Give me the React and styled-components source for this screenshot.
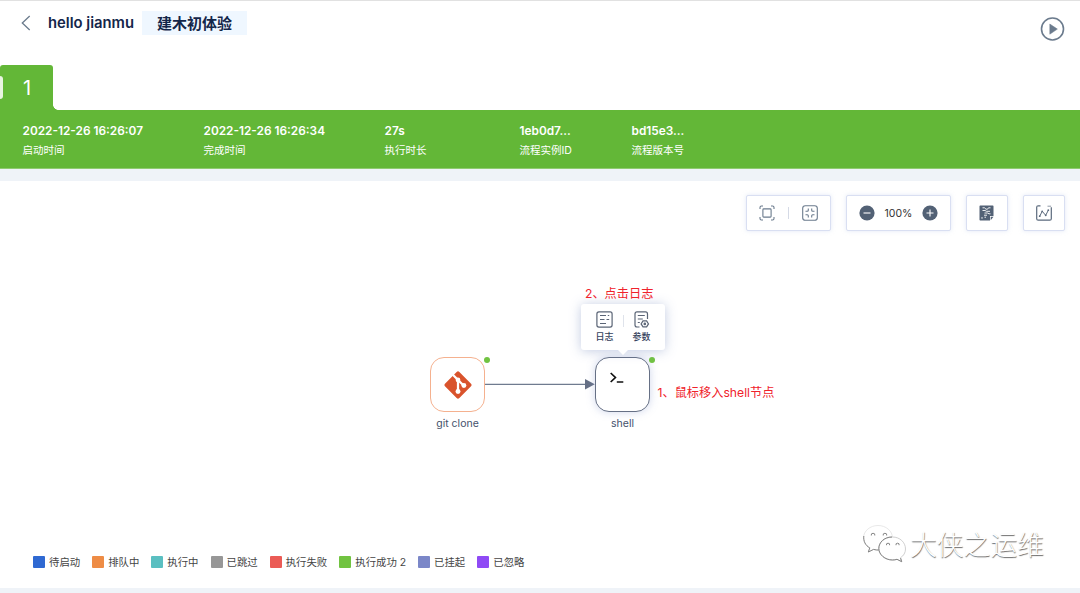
import styled, { createGlobalStyle } from "styled-components";

const runInfo = [
	{ value: "2022-12-26 16:26:07", label: "启动时间", width: 181 },
	{ value: "2022-12-26 16:26:34", label: "完成时间", width: 181 },
	{ value: "27s", label: "执行时长", width: 135 },
	{ value: "1eb0d7...", label: "流程实例ID", width: 112 },
	{ value: "bd15e3...", label: "流程版本号", width: 112 },
];

const legend = [
	{ color: "#2f69d2", label: "待启动" },
	{ color: "#ee8c45", label: "排队中" },
	{ color: "#5abfc1", label: "执行中" },
	{ color: "#979797", label: "已跳过" },
	{ color: "#eb5b56", label: "执行失败" },
	{ color: "#71c341", label: "执行成功 2" },
	{ color: "#7b87c8", label: "已挂起" },
	{ color: "#8f4af5", label: "已忽略" },
];

export default function App() {
	return (
		<Page>
			<GlobalStyle />
			<Header>
				<BackIcon />
				<Title>hello jianmu</Title>
				<Group>建木初体验</Group>
				<PlayIcon />
			</Header>
			<Tabs>
				<Tab>1</Tab>
				<TabCorner />
			</Tabs>
			<RunBar>
				{runInfo.map((item) => (
					<RunItem key={item.label} $width={item.width}>
						<strong>{item.value}</strong>
						<span>{item.label}</span>
					</RunItem>
				))}
			</RunBar>
			<Workflow>
				<Toolbar>
					<ToolBox $width={85}>
						<FitIcon />
						<ToolDivider />
						<ShrinkIcon />
					</ToolBox>
					<ToolBox $width={105}>
						<ZoomIcon />
						<Percent>100%</Percent>
						<ZoomIcon plus />
					</ToolBox>
					<ToolBox $width={42}>
						<DslIcon />
					</ToolBox>
					<ToolBox $width={42}>
						<ChartIcon />
					</ToolBox>
				</Toolbar>
				<Canvas>
					<Edge />
					<Node $x={430} $border="#f5b18f">
						<GitIcon />
						<Dot />
						<NodeName>git clone</NodeName>
					</Node>
					<Node $x={595} $border="#667085" $hover>
						<ShellIcon />
						<Dot />
						<NodeName>shell</NodeName>
					</Node>
					<Popover>
						<PopoverAction>
							<LogIcon />
							日志
						</PopoverAction>
						<PopoverDivider />
						<PopoverAction>
							<ParamIcon />
							参数
						</PopoverAction>
					</Popover>
					<Note $x={585} $y={104}>2、点击日志</Note>
					<Note $x={657.5} $y={203}>1、鼠标移入shell节点</Note>
					<Watermark>
						<WechatIcon />
						大侠之运维
					</Watermark>
				</Canvas>
				<Legend>
					{legend.map((item) => (
						<LegendItem key={item.label} $color={item.color}>
							<span>{item.label}</span>
						</LegendItem>
					))}
				</Legend>
			</Workflow>
		</Page>
	);
}

function BackIcon() {
	return (
		<svg width="10" height="16" viewBox="0 0 10 16" fill="none" stroke="#6b7b8d" strokeWidth="1.3">
			<path d="M8.7 1L1.3 8l7.4 7" />
		</svg>
	);
}

function PlayIcon() {
	return (
		<svg width="25" height="24" viewBox="0 0 25 24">
			<circle cx="12.5" cy="12" r="11" fill="none" stroke="#6b7b8d" strokeWidth="1.6" />
			<path d="M9.8 7v10.2l7.6-5.1z" fill="#6b7b8d" stroke="#6b7b8d" strokeWidth=".5" strokeLinejoin="round" />
		</svg>
	);
}

function GitIcon() {
	return (
		<svg width="30" height="30" viewBox="0 0 28 28">
			<rect x="4.500" y="4.500" width="19" height="19" rx="1.800" fill="#d9532c" transform="rotate(45 14 14)" />
			<g stroke="#fff" strokeWidth="2.100" fill="none">
				<path d="M8.500 3.800l5.500 5.500V20M14 9.300l5 5" />
			</g>
			<g fill="#fff">
				<circle cx="14" cy="9.300" r="2.200" />
				<circle cx="14" cy="20" r="2.300" />
				<circle cx="19.500" cy="14.500" r="2.300" />
			</g>
		</svg>
	);
}

function FitIcon() {
	return (
		<svg width="16" height="16" viewBox="0 0 16 16" fill="none" stroke="#6b7b8d" strokeWidth="1.1">
			<rect x="3.900" y="3.900" width="8.2" height="8.2" rx=".8" />
			<path d="M1 4V2.4Q1 1 2.4 1H4M12 1h1.6Q15 1 15 2.4V4M15 12v1.6q0 1.4-1.4 1.4H12M4 15H2.4Q1 15 1 13.600V12" />
		</svg>
	);
}

function ShrinkIcon() {
	return (
		<svg width="16" height="16" viewBox="0 0 16 16" fill="none" stroke="#6b7b8d" strokeWidth="1.1">
			<rect x=".7" y=".7" width="14.6" height="14.6" rx="2.6" />
			<path d="M6.300 3.500v1.800q0 1-1 1H3.500M9.700 3.500v1.800q0 1 1 1h1.800M6.300 12.500v-1.800q0-1-1-1H3.500M9.700 12.500v-1.800q0-1 1-1h1.800" />
		</svg>
	);
}

function ZoomIcon({ plus }) {
	return (
		<svg width="16" height="16" viewBox="0 0 16 16">
			<circle cx="8" cy="8" r="7.600" fill="#526175" />
			<path d={plus ? "M4.500 8h7M8 4.500v7" : "M4.500 8h7"} stroke="#fff" strokeWidth="1.1" />
		</svg>
	);
}

function DslIcon() {
	return (
		<svg width="15" height="16" viewBox="0 0 15 16">
			<path d="M1.200.500h12.600q.7 0 .7.700V11H11v4.500H1.200q-.7 0-.7-.7V1.200q0-.7.7-.7z" fill="#526175" />
			<path d="M11.700 11.700h2.800l-2.800 3.500z" fill="#526175" />
			<path
				d="M3.500 2.800h2l1.500 1.400h1.500l1-1.400h2M3.500 5.500h2.500l1.500.8h3.500M5.500 8h3l1.500.8h1.500M5 10.200h3M3 12v1.800M5.500 12.200h1.500"
				stroke="#fff"
				strokeWidth=".9"
				fill="none"
			/>
		</svg>
	);
}

function ChartIcon() {
	return (
		<svg width="16" height="16" viewBox="0 0 16 16" fill="none" stroke="#5b6a7d" strokeWidth="1.2">
			<path d="M4.500.8H2.200Q.7.800.7 2.300v11.400q0 1.500 1.500 1.500h11.600q1.500 0 1.500-1.500V2.300" />
			<path d="M11.500 1.200h3.600" strokeWidth="1" opacity=".7" />
			<path d="M3.700 11.300l2.500-5 3.500 4 2.600-5" strokeWidth="1" />
			<g fill="#5b6a7d" stroke="none">
				<circle cx="3.700" cy="11.200" r=".9" />
				<circle cx="6.200" cy="6.300" r=".9" />
				<circle cx="9.700" cy="10.300" r=".9" />
				<circle cx="12.300" cy="5.200" r=".9" />
			</g>
		</svg>
	);
}

function LogIcon() {
	return (
		<svg width="17" height="17" viewBox="0 0 17 17" fill="none" stroke="#5b6576" strokeWidth="1.200">
			<rect x=".9" y=".9" width="15.200" height="15.200" rx="2" />
			<path d="M4 4.500h6M11.800 4.500h1.400M4 8.500h4.500M10.500 8.500h2.700M4 12.500h6" />
		</svg>
	);
}

function ParamIcon() {
	return (
		<svg width="17" height="17" viewBox="0 0 17 17" fill="none" stroke="#5b6576" strokeWidth="1.200">
			<path d="M6.500 16H4q-2 0-2-2V2.900q0-2 2-2h8.500q2 0 2 2V8M4.800 4.500h7M4.800 8h5M4.800 11.500h2" />
			<path d="M10 9.900h3.600l1.900 3-1.900 3H10l-1.900-3z" />
			<circle cx="11.800" cy="12.900" r=".7" />
		</svg>
	);
}

function ShellIcon() {
	return (
		<svg width="28" height="28" viewBox="0 0 28 28" fill="none" stroke="#111" strokeWidth="1.700">
			<path d="M1.700 2l4.700 4.500-4.700 4.500M7.800 11h6.500" />
		</svg>
	);
}

// two overlapping chat bubbles, white with a grey lower edge
function WechatIcon() {
	return (
		<svg width="46" height="42" viewBox="0 0 46 42" fill="#fff">
			<path
				d="M16 1.500C8 1.500 1.500 7 1.500 14c0 4 2.500 7.700 6.300 9.900L6.300 28l5.300-2.600c1.500.5 3 .7 4.400.7 8 0 14.500-5.100 14.500-12.100S24 1.500 16 1.500z"
				stroke="#dedede"
				strokeWidth=".7"
			/>
			<path
				d="M30.500 13C23 13 16.800 18.200 16.800 24.500S23 36 30.500 36c1.500 0 3-.2 4.500-.7l4.700 2.400-1.200-4c3.200-2 5-5 5-8.700C43.500 18.300 37.800 13 30.500 13z"
				stroke="#c4c4c4"
				strokeWidth=".8"
			/>
			<g fill="none" stroke="#858585" strokeWidth="1">
				<path d="M1.800 12c-.5 5 1.500 9.500 6 11.900L6.300 28l5.300-2.600q3 .8 5 .6" />
				<path d="M30 13C22 13 16.800 18.500 16.800 24.500S23 36 30.500 36q2.500 0 4.500-.7l4.700 2.400-1.100-3.500" />
				<path d="M9.300 11.500a1.800 1.800 0 1 1 3.500 0M21.200 11.500a1.800 1.800 0 1 1 3.500 0M24.500 21.200a1.600 1.600 0 1 1 3.100 0M34 21.200a1.600 1.600 0 1 1 3.100 0" />
			</g>
		</svg>
	);
}

function Edge() {
	return (
		<EdgeSvg width="110" height="12" viewBox="0 0 110 12">
			<path d="M0 6.400h102" stroke="#6f7b8f" strokeWidth="1.200" />
			<path d="M100 1l9.800 5.200-9.800 5.300z" fill="#667085" />
		</EdgeSvg>
	);
}

const GlobalStyle = createGlobalStyle`
	* {
		box-sizing: border-box;
	}
	body {
		margin: 0;
		background: #eff3f8;
		font-family: Inter, "Noto Sans CJK SC", sans-serif;
	}
	svg {
		display: block;
		flex-shrink: 0;
	}
`;

const Page = styled.div`
	width: 1080px;
	height: 593px;
	overflow: hidden;
	display: flex;
	flex-direction: column;
	border-top: 1px solid #e1e1e1;
`;

const Header = styled.header`
	height: 64px;
	padding: 10px 15px 0 21px;
	display: flex;
	align-items: flex-start;
	background: #fff;
	> svg:first-child {
		margin-top: 4px;
	}
	> svg:last-child {
		margin: 6px 0 0 auto;
	}
`;

const Title = styled.h1`
	margin: 0 0 0 17px;
	width: 94px;
	line-height: 25px;
	font-size: 14.8px;
	font-weight: 600;
	white-space: nowrap;
	color: #14264a;
`;

const Group = styled.div`
	width: 105px;
	height: 24px;
	line-height: 25px;
	text-align: center;
	background: #eff7ff;
	color: #14264a;
	font-size: 15px;
	font-weight: 700;
`;

const Tabs = styled.div`
	height: 45px;
	display: flex;
	align-items: flex-end;
	background: #fff;
`;

const Tab = styled.div`
	width: 53px;
	height: 45px;
	display: flex;
	align-items: center;
	background: #63b737;
	border-radius: 3px 3px 0 0;
	color: #fff;
	font-size: 20px;
	&::before {
		content: "";
		width: 3px;
		height: 23px;
		margin-right: 20px;
		border-radius: 0 3px 3px 0;
		background: rgba(255, 255, 255, 0.85);
	}
`;

const TabCorner = styled.div`
	width: 5px;
	height: 5px;
	background: radial-gradient(circle at 100% 0, #fff 4.500px, #63b737 5px);
`;

const RunBar = styled.section`
	height: 59px;
	padding: 12px 22.5px 0;
	display: flex;
	background: #63b737;
	border-bottom: 1px solid #8fcb70;
	color: #fff;
`;

const RunItem = styled.div`
	width: ${(props) => props.$width}px;
	display: flex;
	flex-direction: column;
	white-space: nowrap;
	strong {
		font-size: 11.85px;
		font-weight: 600;
		line-height: 19px;
	}
	span {
		font-size: 10.5px;
		line-height: 20px;
	}
`;

const Workflow = styled.main`
	height: 407px;
	margin-top: 12px;
	display: flex;
	flex-direction: column;
	background: #fff;
	position: relative;
`;

const Toolbar = styled.div`
	height: 50px;
	padding: 14px 15px 0;
	display: flex;
	justify-content: flex-end;
	gap: 15px;
`;

const ToolBox = styled.div`
	width: ${(props) => props.$width}px;
	height: 36px;
	padding: 0 12px;
	display: flex;
	align-items: center;
	justify-content: space-between;
	border: 1px solid #d9dff2;
	border-radius: 2px;
	box-shadow: 0 0 4px rgba(200, 212, 240, 0.5);
	background: #fff;
`;

const ToolDivider = styled.div`
	width: 1px;
	height: 12px;
	background: #d5dae6;
`;

const Percent = styled.span`
	width: 42px;
	text-align: center;
	font-size: 10.5px;
	color: #333;
`;

const Canvas = styled.div`
	flex: 1;
`;

const EdgeSvg = styled.svg`
	position: absolute;
	left: 485px;
	top: 197px;
`;

const Node = styled.div`
	position: absolute;
	left: ${(props) => props.$x}px;
	top: 176px;
	width: 55px;
	height: 55px;
	display: flex;
	align-items: center;
	justify-content: center;
	border: 1px solid ${(props) => props.$border};
	border-radius: 14px;
	background: #fff;
	box-shadow: ${(props) => (props.$hover ? "0 0 8px rgba(120, 140, 200, 0.35)" : "none")};
`;

const Dot = styled.span`
	position: absolute;
	right: -6px;
	top: -1px;
	width: 6px;
	height: 6px;
	border-radius: 50%;
	background: #71c341;
`;

const NodeName = styled.span`
	position: absolute;
	top: 58px;
	width: 90px;
	line-height: 16px;
	text-align: center;
	font-size: 10.5px;
	color: #44516b;
`;

const Popover = styled.div`
	position: absolute;
	left: 581px;
	top: 123px;
	width: 84px;
	height: 46px;
	padding: 7px 10px 0;
	display: flex;
	justify-content: space-between;
	border-radius: 3px;
	background: #fff;
	box-shadow: 0 1px 12px rgba(120, 140, 190, 0.45);
	&::after {
		content: "";
		position: absolute;
		left: 37px;
		top: 46px;
		border: 5px solid transparent;
		border-top: 5px solid #fff;
		border-bottom: 0;
	}
`;

const PopoverAction = styled.div`
	width: 27px;
	display: flex;
	flex-direction: column;
	align-items: center;
	font-size: 9px;
	font-weight: 500;
	line-height: 18px;
	color: #33415c;
`;

const PopoverDivider = styled.div`
	width: 1px;
	height: 12px;
	margin-top: 4px;
	background: #dfe3eb;
`;

const Note = styled.span`
	position: absolute;
	left: ${(props) => props.$x}px;
	top: ${(props) => props.$y}px;
	line-height: 18px;
	font-size: 12.2px;
	white-space: nowrap;
	color: #f0222b;
`;

const Legend = styled.div`
	height: 52px;
	padding: 20px 33px 0;
	display: flex;
	gap: 12px;
`;

const LegendItem = styled.div`
	height: 12px;
	display: flex;
	white-space: nowrap;
	font-size: 10.4px;
	line-height: 13px;
	color: #444;
	&::before {
		content: "";
		width: 12px;
		height: 12px;
		margin-right: 4px;
		border-radius: 1px;
		background: ${(props) => props.$color};
	}
`;

const Watermark = styled.div`
	position: absolute;
	left: 862px;
	top: 343px;
	display: flex;
	align-items: center;
	gap: 2px;
	font-size: 26.8px;
	font-weight: 300;
	line-height: 40px;
	white-space: nowrap;
	color: #fff;
	text-shadow: 0.5px 0.5px 1px rgba(0, 0, 0, 0.6);
`;
